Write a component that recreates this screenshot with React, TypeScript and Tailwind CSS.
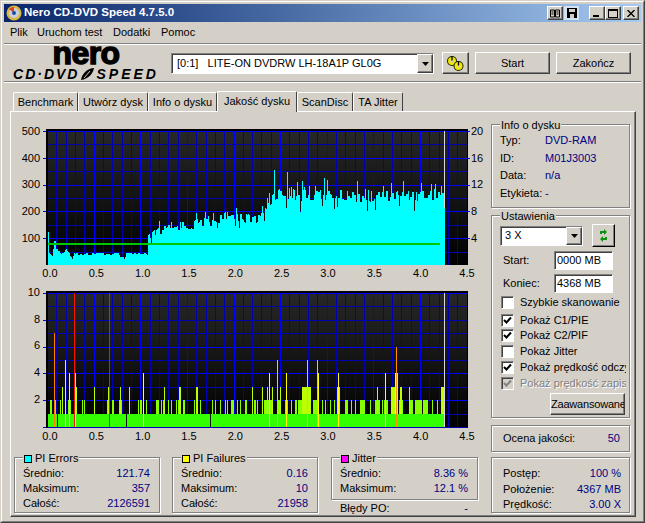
import React from 'react';

const FONT = '[font-family:"Liberation_Sans",Arial,sans-serif]';

// piecewise outline of the PI errors graph, in page pixels
const envelope: [number, number][] = [
  [48, 253], [52, 256], [54, 242], [55, 242], [56, 250], [60, 252], [64, 253], [66, 249], [70, 256], [72, 258], [74, 252],
  [78, 254], [100, 254], [118, 254], [120, 258], [124, 258], [126, 254], [145, 254], [147, 256], [148, 238], [155, 233],
  [165, 230], [175, 228], [180, 225], [190, 226], [200, 222], [210, 222], [220, 218], [235, 215], [240, 216], [250, 220],
  [260, 217], [262, 211], [265, 205], [272, 199], [280, 192], [290, 193], [300, 196], [320, 194], [340, 196], [380, 196],
  [420, 195], [444, 193],
];

const spikes: Record<number, number> = {
  48: 232, 274: 170, 287: 172, 297: 182, 315: 186, 324: 178, 327: 180, 357: 181, 403: 181, 431: 184, 435: 184, 391: 183, 304: 187, 383: 186,
};

function topAt(x: number) {
  for (let i = 1; i < envelope.length; i++) {
    const [x1, y1] = envelope[i];
    const [x0, y0] = envelope[i - 1];
    if (x <= x1) return y0 + ((y1 - y0) * (x - x0)) / (x1 - x0 || 1);
  }
  return 193;
}

function noise(i: number) {
  const s = Math.sin(i * 12.9898) * 43758.5453;
  return s - Math.floor(s);
}

function cyanPath() {
  let d = '';
  for (let x = 48; x <= 444; x++) {
    const n = noise(Math.floor(x / 2));
    const single = noise(x + 500);
    const amp = x < 148 ? 1.5 : x < 262 ? 5 : 6;
    let y = topAt(x) + (n - 0.5) * amp * 2;
    if (x > 148 && single > 0.92) y -= x < 262 ? 6 : 9;
    if (x > 148 && single < 0.09) y += x < 262 ? 7 : 11;
    d += `M${x + 0.5} 265V${spikes[x] ?? Math.round(y)}`;
  }
  return d;
}

const X_MINOR = Array.from({ length: 46 }, (_, i) => i);
const xAt = (tenth: number) => Math.round(47.1 + tenth * 9.32) + 0.5;

function Grid({ top, bottom, majors }: { top: number; bottom: number; majors: number[] }) {
  const step = (bottom - top) / 10;
  return (
    <g shapeRendering="crispEdges">
      {X_MINOR.filter((v) => v > 0).map((v) => (
        <line key={v} x1={xAt(v)} x2={xAt(v)} y1={top} y2={bottom} stroke={v % 5 === 0 ? '#0000ff' : '#0000b0'} />
      ))}
      {Array.from({ length: 11 }, (_, i) => {
        const y = Math.round(top + i * step) + 0.5;
        return <line key={i} x1={46} x2={467} y1={y} y2={y} stroke={majors.includes(i) ? '#0000ff' : '#0000b0'} />;
      })}
      {[0, 2, 4, 6, 8, 10].map((i) => {
        const y = Math.round(top + i * step) + 0.5;
        return <line key={i} x1={43} x2={46} y1={y} y2={y} stroke="#0000ff" />;
      })}
    </g>
  );
}

function TopPlot() {
  return (
    <svg width={429} height={137} viewBox="42 128 429 137" className="block shrink-0">
      <defs>
        <linearGradient id="fade" x1="0" y1="0" x2="0" y2="1">
          <stop offset="0" stopColor="#282828" />
          <stop offset="1" stopColor="#000000" />
        </linearGradient>
      </defs>
      <rect x={46} y={129} width={422} height={136} fill="url(#fade)" shapeRendering="crispEdges" />
      <Grid top={131} bottom={265} majors={[0, 2, 4, 6, 8, 10]} />
      <g shapeRendering="crispEdges">
        <rect x={46} y={129} width={422} height={2} fill="#000" />
        <rect x={46} y={129} width={2} height={136} fill="#000" />
        <rect x={467} y={129} width={1} height={136} fill="#000" />
        <path d={cyanPath()} stroke="#00ffff" strokeWidth={1} />
        <rect x={48} y={243} width={392} height={2} fill="#00c800" />
        <rect x={444} y={131} width={1} height={77} fill="#d8d8d8" />
        {[131, 157.8, 184.6, 211.4, 238.2].map((y) => (
          <rect key={y} x={467} y={Math.round(y)} width={3} height={1} fill="#0000ff" />
        ))}
      </g>
    </svg>
  );
}

// zoom-x ranges read off the reference, [from, to, level]
const LEFT_BARS: [number, number, number][] = [
  [150, 156, 2], [163, 168, 2], [180, 183, 2], [187, 191, 3], [204, 212, 2], [225, 230, 3], [247, 250, 2], [252, 255, 2], [283, 287, 3],
  [322, 332, 2], [325, 328, 3], [337, 344, 2], [357, 365, 2], [360, 363, 3], [388, 391, 3], [415, 418, 2], [420, 425, 2], [437, 440, 2],
  [468, 478, 2], [484, 487, 2], [490, 497, 2], [493, 496, 3], [504, 507, 2], [512, 515, 2], [528, 531, 2], [535, 545, 2], [537, 542, 3],
  [550, 555, 2], [582, 585, 2], [589, 594, 3], [600, 603, 2], [635, 638, 2], [645, 648, 2], [660, 663, 2], [675, 678, 2], [680, 684, 2],
  [692, 702, 2], [710, 713, 2], [720, 723, 2], [735, 740, 2],
];
const RIGHT_BARS: [number, number, number][] = [
  [15, 20, 2], [37, 40, 3], [42, 47, 2], [52, 55, 2], [65, 69, 3], [72, 98, 2], [80, 83, 3], [95, 98, 3], [112, 125, 2], [120, 123, 3],
  [135, 143, 2], [152, 155, 2], [165, 170, 2], [175, 190, 2], [185, 188, 3], [190, 213, 3], [220, 237, 2], [230, 236, 3], [245, 248, 2],
  [255, 258, 2], [270, 273, 2], [282, 285, 2], [292, 302, 3], [315, 325, 2], [332, 335, 2], [345, 348, 2], [360, 375, 2], [390, 393, 2],
  [405, 420, 2], [412, 415, 3], [425, 428, 2], [432, 445, 2], [453, 465, 3], [465, 473, 4], [478, 490, 2], [480, 485, 3], [507, 510, 3],
  [510, 520, 2], [525, 545, 2], [550, 565, 2], [575, 578, 2], [590, 593, 2], [603, 612, 3],
];
const THIN: [number, number, string][] = [
  [54, 7, '#ff8000'], [74, 10, '#ff1000'], [109, 10, '#e01818'], [65, 5, '#ffee44'], [69, 4, '#ffff00'], [75, 4, '#ffff00'], [143, 4, '#ffff40'],
  [269, 4, '#ffff00'], [277, 5, '#ffc820'], [286, 4, '#ffff00'], [307, 5, '#ffc820'], [317, 5, '#ffc020'], [318, 4, '#ffff00'], [338, 4, '#ffff00'],
  [385, 4, '#ffff00'], [396, 6, '#ff9000'],
];

const LEVEL_COLOR: Record<number, string> = { 2: '#88ff00', 3: '#bcff00', 4: '#ffff00' };
const levelY = (l: number) => Math.round(427 - l * 13.4);

function BottomPlot() {
  const bars = [
    ...LEFT_BARS.map(([a, b, l]) => [Math.round(a / 3), Math.max(1, Math.round((b - a) / 3)), l] as const),
    ...RIGHT_BARS.map(([a, b, l]) => [240 + Math.round(a / 3), Math.max(1, Math.round((b - a) / 3)), l] as const),
  ];
  return (
    <svg width={429} height={137} viewBox="42 291 429 137" className="block shrink-0">
      <defs>
        <linearGradient id="fade2" x1="0" y1="0" x2="0" y2="1">
          <stop offset="0" stopColor="#282828" />
          <stop offset="1" stopColor="#000000" />
        </linearGradient>
      </defs>
      <rect x={46} y={291} width={422} height={137} fill="url(#fade2)" shapeRendering="crispEdges" />
      <Grid top={293} bottom={427} majors={[0, 4, 6, 8]} />
      <g shapeRendering="crispEdges">
        <rect x={46} y={291} width={422} height={2} fill="#000" />
        <rect x={46} y={291} width={2} height={137} fill="#000" />
        <rect x={467} y={291} width={1} height={137} fill="#000" />
        <rect x={48} y={414} width={396} height={13} fill="#33ff00" />
        {[57, 126, 210].map((x) => (
          <rect key={x} x={x} y={414} width={1} height={13} fill="#001000" />
        ))}
        {bars.map(([x, w, l], i) => (
          <rect key={i} x={x} y={levelY(l)} width={w} height={414 - levelY(l)} fill={LEVEL_COLOR[l]} />
        ))}
        {THIN.map(([x, l, c]) => (
          <rect key={x} x={x} y={levelY(l)} width={1} height={427 - levelY(l)} fill={c} />
        ))}
        <rect x={444} y={293} width={1} height={134} fill="#d8d8d8" />
      </g>
    </svg>
  );
}

function AxisLabels({ labels, className }: { labels: string[]; className: string }) {
  return (
    <div className={`flex flex-col shrink-0 ${className}`}>
      {labels.map((l) => (
        <span key={l} className="h-[26.75px] flex items-center justify-end leading-none text-black">
          {l}
        </span>
      ))}
    </div>
  );
}

function XLabels({ className }: { className: string }) {
  return (
    <div className={`flex justify-between w-[447px] ml-[21px] pt-[3px] leading-none text-black ${className}`}>
      {['0.0', '0.5', '1.0', '1.5', '2.0', '2.5', '3.0', '3.5', '4.0', '4.5'].map((l) => (
        <span key={l} className="w-[30px] text-center">
          {l}
        </span>
      ))}
    </div>
  );
}

function Group({ className, title, swatch, children }: { className: string; title: string; swatch?: string; children?: React.ReactNode }) {
  return (
    <div className={`relative border border-[#808080] shadow-[1px_1px_0_#fff,inset_1px_1px_0_#fff] ${className}`}>
      {title && (
        <div className="absolute -top-[6px] left-[8px] flex items-center gap-[3px] bg-[#d4d0c8] px-[1px] h-[13px] leading-none">
          {swatch && <span className={`w-[8px] h-[8px] border border-black ${swatch}`} />}
          <span>{title}</span>
        </div>
      )}
      {children}
    </div>
  );
}

function StatRow({ label, value, className = '' }: { label: string; value: string; className?: string }) {
  return (
    <div className={`flex justify-between leading-none ${className}`}>
      <span>{label}</span>
      <span className="text-[#000080]">{value}</span>
    </div>
  );
}

function CheckRow({ label, checked, disabled, className = '' }: { label: string; checked?: boolean; disabled?: boolean; className?: string }) {
  return (
    <div className={`flex items-center gap-[6px] h-[13px] w-[125px] overflow-hidden whitespace-nowrap ml-[1px] ${className}`}>
      <span className={`w-[13px] h-[13px] shrink-0 border border-t-[#808080] border-l-[#808080] border-r-white border-b-white shadow-[inset_1px_1px_0_#404040] flex items-center justify-center ${disabled ? 'bg-[#d4d0c8]' : 'bg-white'}`}>
        {checked && (
          <svg width="9" height="9" viewBox="0 0 9 9">
            <path d="M1 4 L3.5 6.5 L8 1.5" fill="none" stroke={disabled ? '#808080' : '#000'} strokeWidth="2" />
          </svg>
        )}
      </span>
      <span className={disabled ? 'text-[#808080] [text-shadow:1px_1px_0_#fff]' : ''}>{label}</span>
    </div>
  );
}

const raised = 'border border-t-white border-l-white border-r-[#404040] border-b-[#404040] shadow-[inset_-1px_-1px_0_#808080] bg-[#d4d0c8]';
const sunken = 'border border-t-[#808080] border-l-[#808080] border-r-white border-b-white shadow-[inset_1px_1px_0_#404040] bg-white';

function DropArrow() {
  return (
    <span className={`${raised} w-[16px] h-full flex items-center justify-center shrink-0`}>
      <svg width="7" height="4" viewBox="0 0 7 4"><path d="M0 0h7L3.5 4z" fill="#000" /></svg>
    </span>
  );
}

function Tab({ label, width, active }: { label: string; width: string; active?: boolean }) {
  return (
    <div
      className={`${width} flex items-center justify-center rounded-t-[2px] border-t border-l border-t-white border-l-white border-r border-r-[#404040] whitespace-nowrap bg-[#d4d0c8] ${
        active ? 'h-[21px] -mb-[1px] relative z-10 pb-[2px]' : 'h-[19px]'
      }`}
    >
      {label}
    </div>
  );
}

function TitleButton({ children, className = '' }: { children: React.ReactNode; className?: string }) {
  return <span className={`${raised} w-[16px] h-[14px] flex items-center justify-center ${className}`}>{children}</span>;
}

function Ring({ cx, cy }: { cx: number; cy: number }) {
  return (
    <g>
      <circle cx={cx} cy={cy} r="5" fill="#202000" />
      <circle cx={cx} cy={cy} r="4" fill="#f0e800" />
      <circle cx={cx} cy={cy} r="1.6" fill="#d4d0c8" />
      <path d={`M${cx} ${cy - 4.5}v4`} stroke="#000" strokeWidth="1.3" />
    </g>
  );
}

export default function App() {
  return (
    <div className={`w-[645px] h-[523px] bg-[#d4d0c8] text-[11px] text-black overflow-hidden border border-t-[#d4d0c8] border-l-[#d4d0c8] border-r-[#404040] border-b-[#404040] ${FONT}`}>
      <div className="h-full border border-t-white border-l-white border-r-[#808080] border-b-[#808080] px-[2px] pt-[2px] flex flex-col">
        {/* title bar */}
        <div className="h-[18px] shrink-0 flex items-center bg-gradient-to-r from-[#0a246a] to-[#a6caf0] pl-[2px] pr-[2px]">
          <svg width="16" height="16" viewBox="0 0 16 16" className="shrink-0">
            <circle cx="8" cy="8" r="7.5" fill="#d8b840" />
            <circle cx="8" cy="8" r="5" fill="#c8d0e0" />
            <path d="M8 8 L3 4 A6 6 0 0 1 8 2z" fill="#e04020" />
            <circle cx="8" cy="8" r="2" fill="#2050a0" />
          </svg>
          <span className="ml-[2px] text-white font-bold text-[11.5px] leading-none whitespace-nowrap">Nero CD-DVD Speed 4.7.5.0</span>
          <div className="ml-auto flex items-center">
            <TitleButton className="w-[15px]">
              <svg width="10" height="9" viewBox="0 0 10 9"><path d="M0.5 1h4v7h-4zM5.5 1h4v7h-4zM1.5 3h2M1.5 5h2M6.5 3h2M6.5 5h2" fill="none" stroke="#000" /></svg>
            </TitleButton>
            <span className="w-[15px] h-[14px] bg-white/60 flex items-center justify-center ml-[1px]">
              <svg width="10" height="10" viewBox="0 0 10 10"><path d="M0 0h10v10H0z" fill="#000" /><path d="M2 1h6v3H2zM3 6h4v4H3z" fill="#d4d0c8" /></svg>
            </span>
            <TitleButton className="ml-[10px]">
              <span className="w-[6px] h-[2px] bg-black mt-[6px] -ml-[2px]" />
            </TitleButton>
            <TitleButton>
              <span className="w-[10px] h-[9px] border border-black border-t-2" />
            </TitleButton>
            <TitleButton className="ml-[2px]">
              <svg width="8" height="7" viewBox="0 0 8 7"><path d="M0.5 0L7.5 7M7.5 0L0.5 7" stroke="#000" strokeWidth="1.4" /></svg>
            </TitleButton>
          </div>
        </div>

        {/* menu */}
        <div className="h-[22px] shrink-0 flex items-center pl-[6px] whitespace-nowrap border-b border-b-[#808080]">
          <span className="w-[27px]">Plik</span>
          <span className="w-[76px]">Uruchom test</span>
          <span className="w-[48px]">Dodatki</span>
          <span>Pomoc</span>
        </div>

        {/* toolbar */}
        <div className="h-[38px] shrink-0 flex items-start border-t border-t-white border-b border-b-[#808080]">
          <div className="w-[167px] shrink-0 pr-[3px] flex flex-col items-center text-black">
            <span className="text-[32px] font-bold leading-[16px] h-[19px] tracking-[-0.6px] [-webkit-text-stroke:1.4px_#000]">nero</span>
            <span className="mt-[3px] flex items-center text-[14px] font-bold italic leading-none whitespace-nowrap">
              <span className="tracking-[2px]">CD·DVD</span>
              <svg width="15" height="12" viewBox="0 0 15 12" className="mx-[1px]"><path d="M1 12 C2 5 8 0 14 0 C13 6 8 11 1 12z" fill="#000" /><path d="M4 10 L10 3" stroke="#d4d0c8" /></svg>
              <span className="tracking-[3px]">SPEED</span>
            </span>
          </div>
          <div className={`${sunken} mt-[8px] w-[263px] h-[21px] flex items-center shrink-0`}>
            <span className="pl-[5px] flex-1 whitespace-pre">[0:1]   LITE-ON DVDRW LH-18A1P GL0G</span>
            <DropArrow />
          </div>
          <button className={`${raised} mt-[7px] ml-[8px] w-[27px] h-[22px] flex items-center justify-center shrink-0`}>
            <svg width="19" height="17" viewBox="0 0 19 17">
              <Ring cx={6} cy={6} />
              <Ring cx={12.5} cy={11} />
            </svg>
          </button>
          <button className={`${raised} mt-[7px] ml-[6px] w-[75px] h-[22px] shrink-0`}>Start</button>
          <button className={`${raised} mt-[7px] ml-[6px] w-[75px] h-[22px] shrink-0`}>Zakończ</button>
        </div>

        {/* tabs */}
        <div className="flex items-end h-[29px] shrink-0 pl-[9px] border-t border-t-white">
          <Tab label="Benchmark" width="w-[65px]" />
          <Tab label="Utwórz dysk" width="w-[70px]" />
          <Tab label="Info o dysku" width="w-[69px]" />
          <Tab label="Jakość dysku" width="w-[80px]" active />
          <Tab label="ScanDisc" width="w-[56px]" />
          <Tab label="TA Jitter" width="w-[50px]" />
        </div>

        {/* page of the active tab */}
        <div className="ml-[6px] w-[626px] h-[406px] shrink-0 border border-t-white border-l-white border-r-[#404040] border-b-[#404040] shadow-[inset_-1px_-1px_0_#808080] flex pl-[3px] pt-[6px]">
          <div className="w-[477px] shrink-0">
            <div className="flex">
              <AxisLabels labels={['500', '400', '300', '200', '100']} className="w-[27px] pr-[1px]" />
              <div className="w-[1px]" />
              <div className="mt-[10px]"><TopPlot /></div>
              <AxisLabels labels={['20', '16', '12', '8', '4']} className="w-[14px] [&>span]:justify-start" />
            </div>
            <XLabels className="h-[14px]" />
            <div className="flex">
              <AxisLabels labels={['10', '8', '6', '4', '2']} className="w-[27px] pr-[1px]" />
              <div className="w-[1px]" />
              <div className="mt-[12px]"><BottomPlot /></div>
            </div>
            <XLabels className="h-[17px]" />
            <div className="flex items-start mt-[12px]">
              <Group title="PI Errors" swatch="bg-[#00ffff]" className="w-[146px] h-[56px] pl-[8px] pr-[9px] pt-[10px]">
                <StatRow label="Średnio:" value="121.74" className="mb-[4px]" />
                <StatRow label="Maksimum:" value="357" className="mb-[4px]" />
                <StatRow label="Całość:" value="2126591" />
              </Group>
              <Group title="PI Failures" swatch="bg-[#ffff00]" className="ml-[12px] w-[146px] h-[56px] pl-[8px] pr-[9px] pt-[10px]">
                <StatRow label="Średnio:" value="0.16" className="mb-[4px]" />
                <StatRow label="Maksimum:" value="10" className="mb-[4px]" />
                <StatRow label="Całość:" value="21958" />
              </Group>
              <div className="ml-[13px] w-[147px]">
                <Group title="Jitter" swatch="bg-[#ff00ff]" className="h-[43px] pl-[8px] pr-[9px] pt-[10px]">
                  <StatRow label="Średnio:" value="8.36 %" className="mb-[4px]" />
                  <StatRow label="Maksimum:" value="12.1 %" />
                </Group>
                <StatRow label="Błędy PO:" value="-" className="mt-[3px] pl-[9px] pr-[10px]" />
              </div>
            </div>
          </div>

          <div className="w-[140px] shrink-0 pt-[6px]">
            <Group title="Info o dysku" className="w-[139px] h-[84px] pl-[8px] pt-[7px]">
              <div className="grid grid-cols-[45px_1fr] auto-rows-[17.5px] items-center leading-none">
                <span>Typ:</span><span className="text-[#000080]">DVD-RAM</span>
                <span>ID:</span><span className="text-[#000080]">M01J3003</span>
                <span>Data:</span><span className="text-[#000080]">n/a</span>
                <span>Etykieta:</span><span className="text-[#000080]">-</span>
              </div>
            </Group>

            <Group title="Ustawienia" className="mt-[7px] w-[139px] h-[203px] pl-[8px] pt-[8px]">
              <div className="flex items-center h-[23px]">
                <div className={`${sunken} w-[83px] h-[20px] flex items-center`}>
                  <span className="flex-1 pl-[4px]">3 X</span>
                  <DropArrow />
                </div>
                <button className="border border-t-white border-l-white border-r-black border-b-black shadow-[inset_-1px_-1px_0_#808080] bg-[#d4d0c8] ml-[9px] w-[23px] h-[23px] flex items-center justify-center">
                  <svg width="11" height="15" viewBox="0 0 11 15">
                    <path d="M2 6V3h4V1l3 3-3 3V5H4v1zM9 9v3H5v2l-3-3 3-3v2h2V9z" fill="#109010" />
                  </svg>
                </button>
              </div>
              <div className="flex items-center h-[19px] mt-[4px]">
                <span className="w-[54px] pl-[3px]">Start:</span>
                <div className={`${sunken} w-[59px] h-full flex items-center pl-[2px]`}>0000 MB</div>
              </div>
              <div className="flex items-center h-[19px] mt-[4px]">
                <span className="w-[54px] pl-[3px]">Koniec:</span>
                <div className={`${sunken} w-[59px] h-full flex items-center pl-[2px]`}>4368 MB</div>
              </div>
              <CheckRow label="Szybkie skanowanie" className="mt-[3px]" />
              <CheckRow label="Pokaż C1/PIE" checked className="mt-[5px]" />
              <CheckRow label="Pokaż C2/PIF" checked className="mt-[2px]" />
              <CheckRow label="Pokaż Jitter" className="mt-[3px]" />
              <CheckRow label="Pokaż prędkość odczytu" checked className="mt-[3px]" />
              <CheckRow label="Pokaż prędkość zapisu" checked disabled className="mt-[3px]" />
              <button className={`${raised} mt-[3px] ml-[50px] w-[75px] h-[22px] overflow-hidden whitespace-nowrap text-left tracking-[-0.2px]`}>Zaawansowane</button>
            </Group>

            <Group title="" className="mt-[7px] w-[139px] h-[27px] pl-[11px] pr-[9px] flex items-center">
              <StatRow label="Ocena jakości:" value="50" className="w-full" />
            </Group>

            <Group title="" className="mt-[5px] w-[139px] h-[56px] pl-[11px] pr-[8px] pt-[10px]">
              <StatRow label="Postęp:" value="100 %" className="mb-[5px]" />
              <StatRow label="Położenie:" value="4367 MB" className="mb-[4px]" />
              <StatRow label="Prędkość:" value="3.00 X" />
            </Group>
          </div>
        </div>
      </div>
    </div>
  );
}
